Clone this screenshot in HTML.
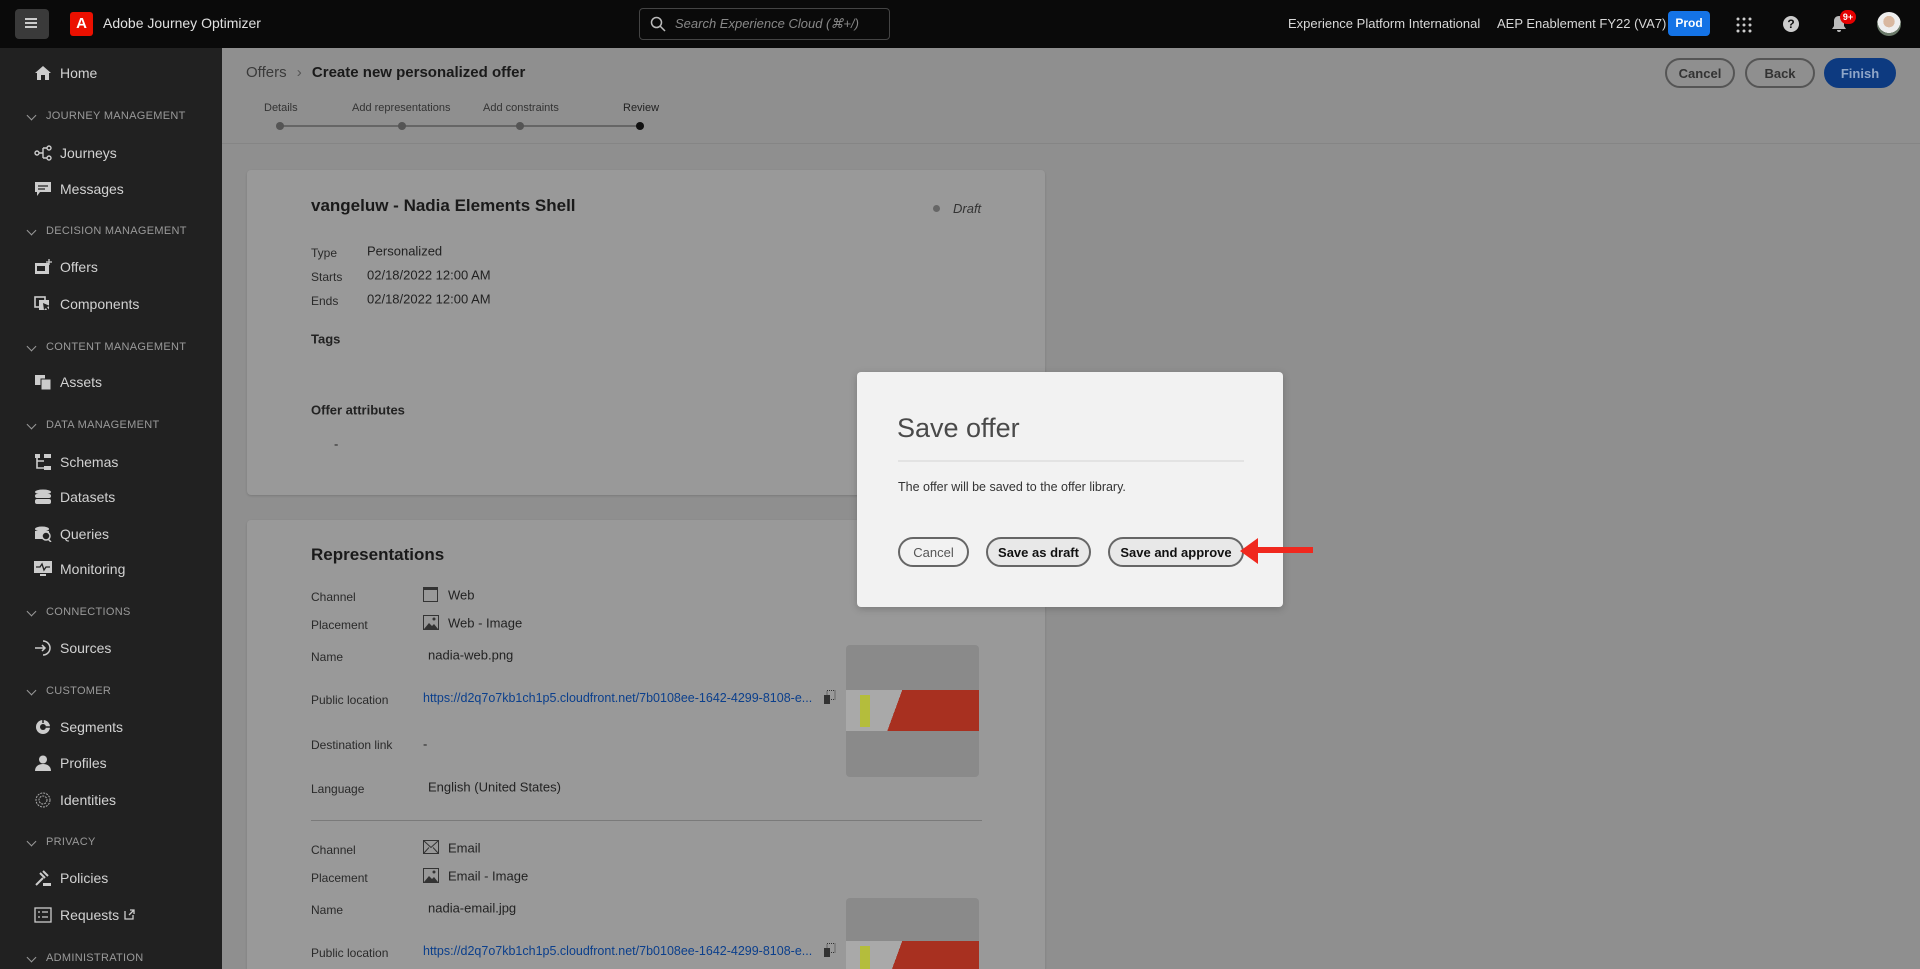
<!DOCTYPE html>
<html style="overflow:hidden;width:1920px;height:969px"><head><meta charset="utf-8"><style>
*{box-sizing:border-box;margin:0;padding:0}
body{width:1920px;height:969px;overflow:hidden;font-family:"Liberation Sans",sans-serif;background:#8f8f8f;position:relative;color:#1a1a1a}
.top{position:absolute;left:0;top:0;width:1920px;height:48px;background:#0a0a0a;color:#d8d8d8}
.abs{position:absolute}
.side{position:absolute;left:0;top:48px;width:222px;height:921px;background:#212121;color:#cfcfcf}
.si{position:absolute;left:60px;font-size:14px;color:#d2d2d2;transform:translateY(-50%)}
.sh{position:absolute;left:46px;font-size:11px;letter-spacing:.3px;color:#9a9a9a;transform:translateY(-50%)}
.sh:before{content:"";position:absolute;left:-18px;top:2px;width:6px;height:6px;border-right:1.5px solid #999;border-bottom:1.5px solid #999;transform:rotate(45deg)}
.ic{position:absolute;left:34px;width:18px;height:16px;transform:translateY(-50%)}
.main{position:absolute;left:222px;top:48px;right:0;bottom:0}
.card{position:absolute;background:#999;border-radius:4px;box-shadow:0 1px 2px rgba(0,0,0,.15)}
.lbl{position:absolute;font-size:12px;color:#2a2a2a;transform:translateY(-50%)}
.val{position:absolute;font-size:13px;color:#222;transform:translateY(-50%)}
.link{color:#0b3f8c}
.btn{position:absolute;height:30px;border:2px solid #444;border-radius:16px;font-size:13px;font-weight:bold;display:flex;align-items:center;justify-content:center}
.thumb{position:absolute;background:#8a8a8a;border-radius:4px;overflow:hidden}
</style></head><body>
<div class="top">
 <div class="abs" style="left:15px;top:9px;width:34px;height:30px;background:#3a3a3a;border-radius:4px"></div>
 <div class="abs" style="left:25px;top:18px;width:12px;height:2px;background:#ccc;box-shadow:0 4px 0 #ccc,0 8px 0 #ccc"></div>
 <div class="abs" style="left:70px;top:12px;width:23px;height:24px;background:#eb1000;border-radius:3px;color:#fff;font-weight:bold;font-size:15px;text-align:center;line-height:24px">A</div>
 <div class="abs" style="left:103px;top:15px;font-size:14px;color:#e0e0e0">Adobe Journey Optimizer</div>
 <div class="abs" style="left:639px;top:8px;width:251px;height:32px;border:1px solid #444;border-radius:4px"></div>
 <svg class="abs" style="left:650px;top:16px" width="16" height="16"><circle cx="6.5" cy="6.5" r="5" fill="none" stroke="#bbb" stroke-width="1.5"/><path d="M10 10l5 5" stroke="#bbb" stroke-width="1.5"/></svg>
 <div class="abs" style="left:675px;top:16px;font-size:13px;font-style:italic;color:#888">Search Experience Cloud (⌘+/)</div>
 <div class="abs" style="left:1288px;top:16px;font-size:13px">Experience Platform International</div>
 <div class="abs" style="left:1497px;top:16px;font-size:13px">AEP Enablement FY22 (VA7)</div>
 <div class="abs" style="left:1668px;top:11px;width:42px;height:25px;background:#1473e6;border-radius:4px;color:#fff;font-size:12px;font-weight:bold;text-align:center;line-height:25px">Prod</div>
 <svg class="abs" style="left:1736px;top:17px" width="16" height="16" fill="#ccc"><circle cx="2" cy="2" r="1.5"/><circle cx="8" cy="2" r="1.5"/><circle cx="14" cy="2" r="1.5"/><circle cx="2" cy="8" r="1.5"/><circle cx="8" cy="8" r="1.5"/><circle cx="14" cy="8" r="1.5"/><circle cx="2" cy="14" r="1.5"/><circle cx="8" cy="14" r="1.5"/><circle cx="14" cy="14" r="1.5"/></svg>
 <div class="abs" style="left:1783px;top:16px;width:16px;height:16px;border-radius:50%;background:#ccc;color:#111;font-size:12px;font-weight:bold;text-align:center;line-height:16px">?</div>
 <svg class="abs" style="left:1831px;top:15px" width="16" height="18"><path d="M8 1c-3 0-5 2-5 5v5l-2 3h14l-2-3V6c0-3-2-5-5-5zM6 15a2 2 0 004 0z" fill="#bbb"/></svg>
 <div class="abs" style="left:1840px;top:10px;width:16px;height:14px;border-radius:7px;background:#e50000;color:#fff;font-size:9px;font-weight:bold;text-align:center;line-height:14px">9+</div>
 <div class="abs" style="left:1877px;top:12px;width:24px;height:24px;border-radius:50%;background:radial-gradient(circle at 50% 40%,#d9b8a0 0 30%,#eee 31% 60%,#6b7a6a 61%)"></div>
</div>
<div class="side">
 <svg class="ic" style="top:25px" viewBox="0 0 18 16"><path d="M9 1L1 8h2v7h4v-5h4v5h4V8h2z" fill="#ccc"/></svg><div class="si" style="top:25px">Home</div>
 <div class="sh" style="top:68px">JOURNEY MANAGEMENT</div>
 <svg class="ic" style="top:105px" viewBox="0 0 18 16"><circle cx="3" cy="8" r="2" fill="none" stroke="#ccc" stroke-width="1.4"/><circle cx="15" cy="3" r="2" fill="none" stroke="#ccc" stroke-width="1.4"/><circle cx="15" cy="13" r="2" fill="none" stroke="#ccc" stroke-width="1.4"/><path d="M5 8h4M9 3v10M9 3h4M9 13h4" stroke="#ccc" stroke-width="1.4" fill="none"/></svg><div class="si" style="top:105px">Journeys</div>
 <svg class="ic" style="top:141px" viewBox="0 0 18 16"><path d="M1 1h16v10H6l-3 4v-4H1z" fill="#ccc"/><path d="M4 5h10M4 8h7" stroke="#222" stroke-width="1.3"/></svg><div class="si" style="top:141px">Messages</div>
 <div class="sh" style="top:183px">DECISION MANAGEMENT</div>
 <svg class="ic" style="top:219px" viewBox="0 0 18 16"><rect x="1" y="4" width="14" height="11" fill="#ccc"/><rect x="3" y="7" width="8" height="5" fill="#222"/><path d="M15 0v6M12 3h6" stroke="#ccc" stroke-width="1.3"/></svg><div class="si" style="top:219px">Offers</div>
 <svg class="ic" style="top:256px" viewBox="0 0 18 16"><rect x="1" y="1" width="10" height="10" fill="none" stroke="#ccc" stroke-width="1.6"/><rect x="5" y="4" width="10" height="10" fill="#ccc"/><path d="M9 7l7 3-3 1 3 4-2 1-2-4-2 2z" fill="#222"/></svg><div class="si" style="top:256px">Components</div>
 <div class="sh" style="top:299px">CONTENT MANAGEMENT</div>
 <svg class="ic" style="top:334px" viewBox="0 0 18 16"><rect x="1" y="1" width="10" height="10" fill="#ccc"/><rect x="7" y="5" width="10" height="11" fill="#ccc" stroke="#222"/></svg><div class="si" style="top:334px">Assets</div>
 <div class="sh" style="top:377px">DATA MANAGEMENT</div>
 <svg class="ic" style="top:414px" viewBox="0 0 18 16"><rect x="1" y="0" width="5" height="4" fill="#ccc"/><rect x="10" y="0" width="7" height="4" fill="#ccc"/><rect x="10" y="12" width="7" height="4" fill="#ccc"/><path d="M3 4v10h7M3 7h7" stroke="#ccc" stroke-width="1.6" fill="none"/></svg><div class="si" style="top:414px">Schemas</div>
 <svg class="ic" style="top:449px" viewBox="0 0 18 16"><ellipse cx="9" cy="3" rx="8" ry="2.5" fill="#ccc"/><rect x="1" y="5" width="16" height="4" rx="2" fill="#ccc"/><rect x="1" y="10" width="16" height="5" rx="2" fill="#ccc"/></svg><div class="si" style="top:449px">Datasets</div>
 <svg class="ic" style="top:486px" viewBox="0 0 18 16"><ellipse cx="8" cy="3" rx="7" ry="2.5" fill="#ccc"/><rect x="1" y="5" width="14" height="8" fill="#ccc"/><circle cx="12" cy="10" r="4" fill="#222" stroke="#ccc" stroke-width="1.5"/><path d="M14 13l3 3" stroke="#ccc" stroke-width="1.5"/></svg><div class="si" style="top:486px">Queries</div>
 <svg class="ic" style="top:521px" viewBox="0 0 18 16"><rect x="0" y="0" width="18" height="12" fill="#ccc"/><path d="M2 6h4l2-3 2 6 2-3h4" stroke="#222" stroke-width="1.3" fill="none"/><rect x="6" y="13" width="6" height="2" fill="#ccc"/></svg><div class="si" style="top:521px">Monitoring</div>
 <div class="sh" style="top:564px">CONNECTIONS</div>
 <svg class="ic" style="top:600px" viewBox="0 0 18 16"><path d="M9 1a7 7 0 110 14" stroke="#ccc" stroke-width="1.5" fill="none"/><path d="M1 8h10M8 5l3 3-3 3" stroke="#ccc" stroke-width="1.5" fill="none"/></svg><div class="si" style="top:600px">Sources</div>
 <div class="sh" style="top:643px">CUSTOMER</div>
 <svg class="ic" style="top:679px" viewBox="0 0 18 16"><circle cx="9" cy="8" r="7" fill="#ccc"/><circle cx="9" cy="8" r="3" fill="#222"/><path d="M9 0v4M16 8h-4" stroke="#222" stroke-width="1.5"/></svg><div class="si" style="top:679px">Segments</div>
 <svg class="ic" style="top:715px" viewBox="0 0 18 16"><circle cx="9" cy="4.5" r="4" fill="#ccc"/><path d="M1 16c0-5 4-7 8-7s8 2 8 7z" fill="#ccc"/></svg><div class="si" style="top:715px">Profiles</div>
 <svg class="ic" style="top:752px" viewBox="0 0 18 16"><circle cx="9" cy="8" r="7" fill="none" stroke="#aaa" stroke-dasharray="2 1"/><circle cx="9" cy="8" r="4" fill="none" stroke="#aaa" stroke-dasharray="2 1"/></svg><div class="si" style="top:752px">Identities</div>
 <div class="sh" style="top:794px">PRIVACY</div>
 <svg class="ic" style="top:830px" viewBox="0 0 18 16"><path d="M2 15l7-7M6 3l5 5M9 1l5 5" stroke="#ccc" stroke-width="2"/><rect x="9" y="13" width="8" height="3" fill="#ccc"/></svg><div class="si" style="top:830px">Policies</div>
 <svg class="ic" style="top:867px" viewBox="0 0 18 16"><rect x="1" y="1" width="16" height="14" fill="none" stroke="#ccc" stroke-width="1.3"/><path d="M4 5h2M4 10h2M8 5h6M8 10h6" stroke="#ccc" stroke-width="1.3"/></svg><div class="si" style="top:867px">Requests</div>
 <svg class="abs" style="left:124px;top:861px" width="11" height="11"><path d="M1 2v8h8V6M5 6l5-5M6 1h4v4" stroke="#ccc" stroke-width="1.3" fill="none"/></svg>
 <div class="sh" style="top:910px">ADMINISTRATION</div>
</div>
<div class="main">
 <div class="abs" style="left:24px;top:16px;font-size:15px;color:#3a3a3a">Offers <span style="color:#555;margin:0 6px">›</span> <b style="color:#1a1a1a">Create new personalized offer</b></div>
 <div class="abs" style="left:42px;top:54px;font-size:11px;color:#333">Details</div>
 <div class="abs" style="left:130px;top:54px;font-size:11px;color:#333">Add representations</div>
 <div class="abs" style="left:261px;top:54px;font-size:11px;color:#333">Add constraints</div>
 <div class="abs" style="left:401px;top:54px;font-size:11px;color:#222">Review</div>
 <div class="abs" style="left:58px;top:77px;width:360px;height:2px;background:#666"></div>
 <div class="abs" style="left:54px;top:74px;width:8px;height:8px;border-radius:50%;background:#555"></div>
 <div class="abs" style="left:176px;top:74px;width:8px;height:8px;border-radius:50%;background:#555"></div>
 <div class="abs" style="left:294px;top:74px;width:8px;height:8px;border-radius:50%;background:#555"></div>
 <div class="abs" style="left:414px;top:74px;width:8px;height:8px;border-radius:50%;background:#111"></div>
 <div class="btn" style="left:1443px;top:10px;width:70px;color:#333;border-color:#555">Cancel</div>
 <div class="btn" style="left:1523px;top:10px;width:70px;color:#333;border-color:#555">Back</div>
 <div class="btn" style="left:1602px;top:10px;width:72px;background:#0d3a80;border-color:#0d3a80;color:#8fa6c8">Finish</div>
 <div class="abs" style="left:0;top:95px;right:0;height:1px;background:#858585"></div>
</div>
<div class="card" style="left:247px;top:170px;width:798px;height:325px"></div>
<div class="abs" style="left:311px;top:196px;font-size:17px;font-weight:bold;color:#1a1a1a">vangeluw - Nadia Elements Shell</div>
<div class="abs" style="left:933px;top:205px;width:7px;height:7px;border-radius:50%;background:#666"></div>
<div class="abs" style="left:953px;top:201px;font-size:13px;font-style:italic;color:#333">Draft</div>
<div class="lbl" style="left:311px;top:253px">Type</div><div class="val" style="left:367px;top:251px">Personalized</div>
<div class="lbl" style="left:311px;top:277px">Starts</div><div class="val" style="left:367px;top:275px">02/18/2022 12:00 AM</div>
<div class="lbl" style="left:311px;top:301px">Ends</div><div class="val" style="left:367px;top:299px">02/18/2022 12:00 AM</div>
<div class="val" style="left:311px;top:339px;font-weight:bold">Tags</div>
<div class="val" style="left:311px;top:410px;font-weight:bold">Offer attributes</div>
<div class="val" style="left:334px;top:444px">-</div>
<div class="card" style="left:247px;top:520px;width:798px;height:449px;border-radius:4px 4px 0 0"></div>
<div class="abs" style="left:311px;top:545px;font-size:17px;font-weight:bold">Representations</div>
<div class="lbl" style="left:311px;top:597px">Channel</div>
<div class="abs" style="left:423px;top:587px;width:15px;height:15px;border:1.5px solid #333;border-top-width:3px"></div><div class="val" style="left:448px;top:595px">Web</div>
<div class="lbl" style="left:311px;top:625px">Placement</div>
<svg class="abs" style="left:423px;top:615px" width="16" height="15"><rect x="0.5" y="0.5" width="15" height="14" fill="none" stroke="#333"/><path d="M1 14l5-6 3 3 2-2 4 5z" fill="#333"/><circle cx="11" cy="4" r="1.5" fill="#333"/></svg><div class="val" style="left:448px;top:623px">Web - Image</div>
<div class="lbl" style="left:311px;top:657px">Name</div><div class="val" style="left:428px;top:655px">nadia-web.png</div>
<div class="lbl" style="left:311px;top:700px">Public location</div><div class="val link" style="left:423px;top:698px;font-size:12.5px">https://d2q7o7kb1ch1p5.cloudfront.net/7b0108ee-1642-4299-8108-e...</div>
<svg class="abs" style="left:824px;top:690px" width="12" height="14"><rect x="3" y="0.5" width="8" height="9" fill="none" stroke="#333" stroke-dasharray="1 1"/><rect x="0" y="5" width="6" height="9" fill="#333"/></svg>
<div class="lbl" style="left:311px;top:745px">Destination link</div><div class="val" style="left:423px;top:744px">-</div>
<div class="lbl" style="left:311px;top:789px">Language</div><div class="val" style="left:428px;top:787px">English (United States)</div>
<div class="thumb" style="left:846px;top:645px;width:133px;height:132px"><div class="abs" style="left:0;top:45px;width:133px;height:41px;background:linear-gradient(110deg,#a9a9a9 0 38%,#a83020 38%)"></div><div class="abs" style="left:14px;top:50px;width:10px;height:32px;background:#b4bd3c"></div></div>
<div class="abs" style="left:311px;top:820px;width:671px;height:1px;background:#7a7a7a"></div>
<div class="lbl" style="left:311px;top:850px">Channel</div>
<svg class="abs" style="left:423px;top:840px" width="16" height="14"><rect x="0.5" y="0.5" width="15" height="13" fill="none" stroke="#333"/><path d="M0.5 0.5l7.5 7 7.5-7M0.5 13.5l5.5-6M15.5 13.5l-5.5-6" stroke="#333" fill="none"/></svg><div class="val" style="left:448px;top:848px">Email</div>
<div class="lbl" style="left:311px;top:878px">Placement</div>
<svg class="abs" style="left:423px;top:868px" width="16" height="15"><rect x="0.5" y="0.5" width="15" height="14" fill="none" stroke="#333"/><path d="M1 14l5-6 3 3 2-2 4 5z" fill="#333"/><circle cx="11" cy="4" r="1.5" fill="#333"/></svg><div class="val" style="left:448px;top:876px">Email - Image</div>
<div class="lbl" style="left:311px;top:910px">Name</div><div class="val" style="left:428px;top:908px">nadia-email.jpg</div>
<div class="lbl" style="left:311px;top:953px">Public location</div><div class="val link" style="left:423px;top:951px;font-size:12.5px">https://d2q7o7kb1ch1p5.cloudfront.net/7b0108ee-1642-4299-8108-e...</div>
<svg class="abs" style="left:824px;top:943px" width="12" height="14"><rect x="3" y="0.5" width="8" height="9" fill="none" stroke="#333" stroke-dasharray="1 1"/><rect x="0" y="5" width="6" height="9" fill="#333"/></svg>
<div class="thumb" style="left:846px;top:898px;width:133px;height:71px;border-radius:4px 4px 0 0"><div class="abs" style="left:0;top:43px;width:133px;height:41px;background:linear-gradient(110deg,#a9a9a9 0 38%,#a83020 38%)"></div><div class="abs" style="left:14px;top:48px;width:10px;height:32px;background:#b4bd3c"></div></div>

<div class="abs" style="left:857px;top:372px;width:426px;height:235px;background:#f2f2f2;border-radius:4px;box-shadow:0 2px 8px rgba(0,0,0,.2)"></div>
<div class="abs" style="left:897px;top:413px;font-size:27px;font-weight:300;color:#4a4a4a">Save offer</div>
<div class="abs" style="left:898px;top:460px;width:346px;height:2px;background:#e3e3e3"></div>
<div class="abs" style="left:898px;top:480px;font-size:12.5px;color:#333">The offer will be saved to the offer library.</div>
<div class="btn" style="left:898px;top:537px;width:71px;color:#555;border-color:#666;font-weight:normal">Cancel</div>
<div class="btn" style="left:986px;top:537px;width:105px;background:#e8e8e8;border-color:#666;color:#111">Save as draft</div>
<div class="btn" style="left:1108px;top:537px;width:136px;background:#e8e8e8;border-color:#666;color:#111">Save and approve</div>
<svg class="abs" style="left:1240px;top:536px" width="75" height="32"><path d="M0 15L18 2v9h55v6H18v11z" fill="#f0281e"/></svg>
</body></html>
